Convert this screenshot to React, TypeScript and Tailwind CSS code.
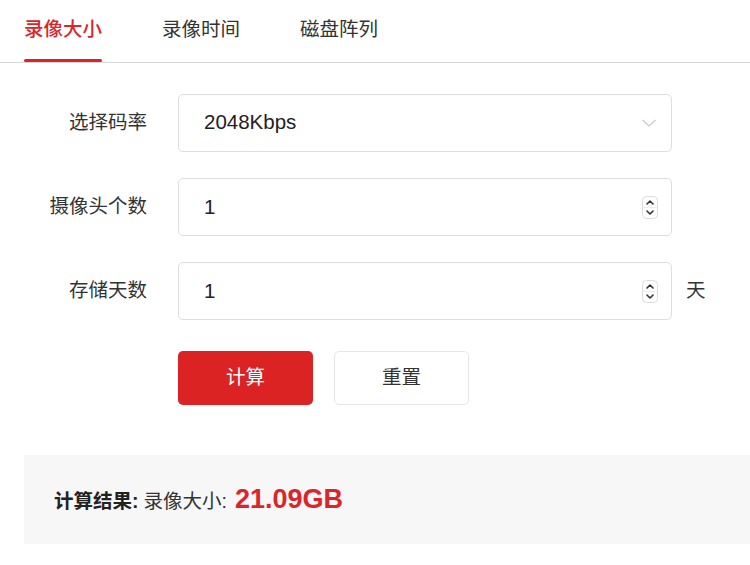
import React from "react";

const font = { fontFamily: '"Liberation Sans", "Noto Sans CJK SC", sans-serif' };

function Stepper() {
  return (
    <svg width="16" height="23" viewBox="0 0 16 23" className="shrink-0">
      <rect x="0.5" y="0.5" width="15" height="22" rx="4" fill="#fff" stroke="#dcdcdc" />
      <line x1="1" y1="11.5" x2="15" y2="11.5" stroke="#eeeeee" />
      <path d="M5 8 L8 5 L11 8" fill="none" stroke="#333" strokeWidth="1.6" strokeLinecap="round" strokeLinejoin="round" />
      <path d="M5 15 L8 18 L11 15" fill="none" stroke="#333" strokeWidth="1.6" strokeLinecap="round" strokeLinejoin="round" />
    </svg>
  );
}

function Chevron() {
  return (
    <svg width="16" height="10" viewBox="0 0 16 10" className="shrink-0">
      <path d="M1.5 2 L8 8 L14.5 2" fill="none" stroke="#c8c8c8" strokeWidth="1.2" />
    </svg>
  );
}

function Row({ label, children, suffix }: { label: string; children: React.ReactNode; suffix?: string }) {
  return (
    <div className="flex items-center">
      <div className="w-[148px] pr-px text-right text-[19.5px] text-[#333]">{label}</div>
      <div className="ml-[30px] flex h-[58px] w-[494px] items-center rounded-[5px] border border-[#dedede] bg-white pl-[25px] pr-[13px] text-[20.5px] text-[#222]">
        {children}
      </div>
      {suffix && <div className="ml-[14px] text-[19.5px] text-[#333]">{suffix}</div>}
    </div>
  );
}

export default function App() {
  return (
    <div className="h-[565px] w-[750px] overflow-hidden bg-white" style={font}>
      <div className="relative flex h-[63px] items-start border-b border-[#d6d6d6] pl-[24px]">
        <div className="relative flex h-[62px] items-center text-[19.5px] font-medium text-[#d9262b]">
          <span className="-mt-[2px]">录像大小</span>
          <div className="absolute bottom-0 left-0 right-0 h-[3px] rounded-full bg-[#d9262b]" />
        </div>
        <div className="ml-[60px] flex h-[62px] items-center text-[19.5px] text-[#333]">
          <span className="-mt-[2px]">录像时间</span>
        </div>
        <div className="ml-[60px] flex h-[62px] items-center text-[19.5px] text-[#333]">
          <span className="-mt-[2px]">磁盘阵列</span>
        </div>
      </div>

      <div className="mt-[31px] flex flex-col gap-[26px]">
        <Row label="选择码率">
          <span className="flex-1 -mt-[1px]">2048Kbps</span>
          <span className="mr-[1px]"><Chevron /></span>
        </Row>
        <Row label="摄像头个数">
          <span className="flex-1">1</span>
          <Stepper />
        </Row>
        <Row label="存储天数" suffix="天">
          <span className="flex-1">1</span>
          <Stepper />
        </Row>
      </div>

      <div className="ml-[178px] mt-[31px] flex gap-[21px]">
        <button className="flex h-[54px] w-[135px] items-center justify-center rounded-[5px] bg-[#dc2323] text-[19.5px] text-white">
          计算
        </button>
        <button className="flex h-[54px] w-[135px] items-center justify-center rounded-[5px] border border-[#e6e6e6] bg-white text-[19.5px] text-[#333]">
          重置
        </button>
      </div>

      <div className="ml-[24px] mt-[50px] flex h-[89px] items-center bg-[#f7f7f7] pl-[30px] pt-[4px]">
        <span className="text-[19.5px] font-bold text-[#222]">计算结果:</span>
        <span className="ml-[5px] text-[19.5px] text-[#333]">录像大小:</span>
        <span className="ml-[8px] -mt-[4px] text-[27px] font-bold text-[#d9262b]">21.09GB</span>
      </div>
    </div>
  );
}
